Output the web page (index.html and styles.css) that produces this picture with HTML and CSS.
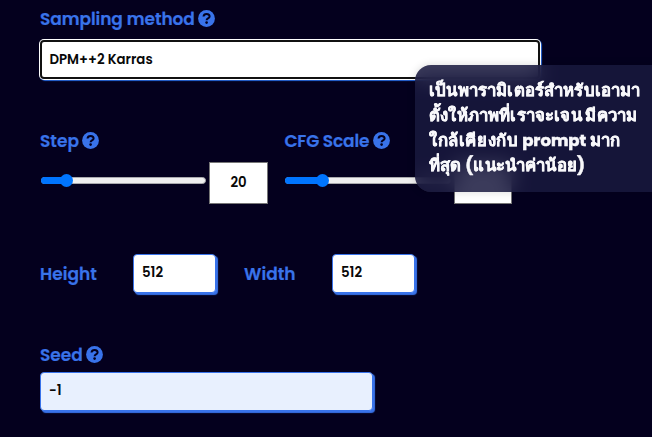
FILE: index.html
```html
<!DOCTYPE html>
<html lang="th">
<head>
<meta charset="utf-8">
<title>Settings</title>
<link rel="stylesheet" href="styles.css">
</head>
<body>
<svg width="0" height="0" class="defs"><symbol id="help" viewBox="0 0 17 17"><circle cx="8.5" cy="8.5" r="8.4" fill="#3973ea"/><path d="M5.5 6.5C5.7 4.6 6.9 3.9 8.6 3.9c1.7 0 3 .9 3 2.5 0 2.1-3 2-3 3.8" fill="none" stroke="#04001e" stroke-width="2"/><circle cx="8.6" cy="12.6" r="1.3" fill="#04001e"/></symbol></svg>
<main class="form">
  <section class="method">
    <div class="label"><span class="t-method">Sampling method</span><svg class="help"><use href="#help"/></svg></div>
    <div class="select">DPM++2 Karras</div>
  </section>
  <section class="sliders">
    <div class="slider-group">
      <div class="label"><span class="t-step">Step</span><svg class="help"><use href="#help"/></svg></div>
      <div class="slider-row"><div class="track"><div class="fill step"></div></div><div class="number">20</div></div>
    </div>
    <div class="slider-group">
      <div class="label"><span class="t-cfg">CFG Scale</span><svg class="help"><use href="#help"/></svg></div>
      <div class="slider-row"><div class="track"><div class="fill cfg"></div></div><div class="number last"></div></div>
    </div>
  </section>
  <section class="dimensions">
    <div class="label name-h">Height</div><div class="field">512</div>
    <div class="label name-w">Width</div><div class="field">512</div>
  </section>
  <section class="seed">
    <div class="label"><span class="t-seed">Seed</span><svg class="help"><use href="#help"/></svg></div>
    <div class="field seed-field">-1</div>
  </section>
</main>
<aside class="tooltip"><div>เป็นพารามิเตอร์สำหรับเอามา</div><div>ตั้งให้ภาพที่เราจะเจน มีความ</div><div><span class="wide">ใกล้เคียงกับ</span> <b>prompt</b> มาก</div><div>ที่สุด (แนะนำค่าน้อย)</div></aside>
</body>
</html>
```
FILE: styles.css
```css
* { box-sizing: border-box; }
body { margin: 0; width: 652px; height: 437px; overflow: hidden; background: #04001e; font-family: Poppins, Inter, "Noto Sans", sans-serif; }
.defs { position: absolute; }
.form { padding: 7px 0 0 40px; }
.label { display: flex; align-items: center; gap: 4px; height: 24px; color: #3973ea; font-size: 17px; font-weight: 600; line-height: 24px; white-space: nowrap; -webkit-text-stroke: .2px #3973ea; }
.label span { flex: none; }
.help { width: 17px; height: 17px; flex: none; margin-top: -1px; }
.t-method { width: 154px; letter-spacing: -.08px; }
.t-step { width: 38px; }
.t-cfg { width: 84px; letter-spacing: -.2px; }
.t-seed { width: 42px; }
.select { width: 500px; height: 39px; margin-top: 9px; padding-left: 7.5px; border: 2px solid #111; border-radius: 4px; background: #fff; box-shadow: 0 0 0 1px #fff, 1px 1px 1px 1px #2765d8; font-size: 13.3px; font-weight: 600; line-height: 35px; color: #080808; }
.sliders { display: flex; gap: 16.5px; margin-top: 50px; }
.slider-group { width: 228px; }
.slider-row { display: flex; gap: 3px; margin-top: 9px; }
.track { width: 165.5px; height: 7px; margin: 15px 0 0 .5px; border: 1px solid #a9a9ad; border-radius: 4px; background: #efefef; flex: none; }
.fill { position: relative; height: 7px; margin: -1px 0 0 -1px; border-radius: 4px; background: #0075ff; }
.fill::after { content: ""; position: absolute; top: -3px; right: -6px; width: 13px; height: 13px; border-radius: 50%; background: #0075ff; }
.step { width: 26px; }
.cfg { width: 38px; }
.number { width: 59px; height: 42px; flex: none; border: 1px solid #767676; background: #fff; color: #080808; font-size: 13.3px; font-weight: 600; line-height: 40px; text-align: center; }
.number.last { width: 58px; }
.dimensions { display: flex; align-items: center; margin-top: 50px; }
.name-h { width: 93px; }
.name-w { width: 88px; margin-left: 28px; }
.field { width: 83px; height: 39px; flex: none; padding-left: 8px; border: 1px solid #3973ea; border-radius: 4px; background: #fff; box-shadow: 2px 2px 1px #3973ea; color: #080808; font-size: 13.3px; font-weight: 600; line-height: 36px; }
.seed { margin-top: 50px; }
.seed-field { width: 333px; margin-top: 5px; background: #e8f0fe; }
.tooltip { position: absolute; left: 415px; top: 65px; width: 260px; height: 127px; padding: 13px 0 0 14px; border-radius: 16px; background: rgba(25,25,62,.85); backdrop-filter: blur(10px); box-shadow: 0 0 8px rgba(0,0,0,.15); color: #f8f8fb; font-size: 16.7px; font-weight: 700; line-height: 25px; white-space: nowrap; letter-spacing: .17px; -webkit-text-stroke: .5px #f8f8fb; }
.tooltip b { font-size: 16.5px; font-weight: 700; letter-spacing: 0; }
.wide { letter-spacing: .6px; }
```
